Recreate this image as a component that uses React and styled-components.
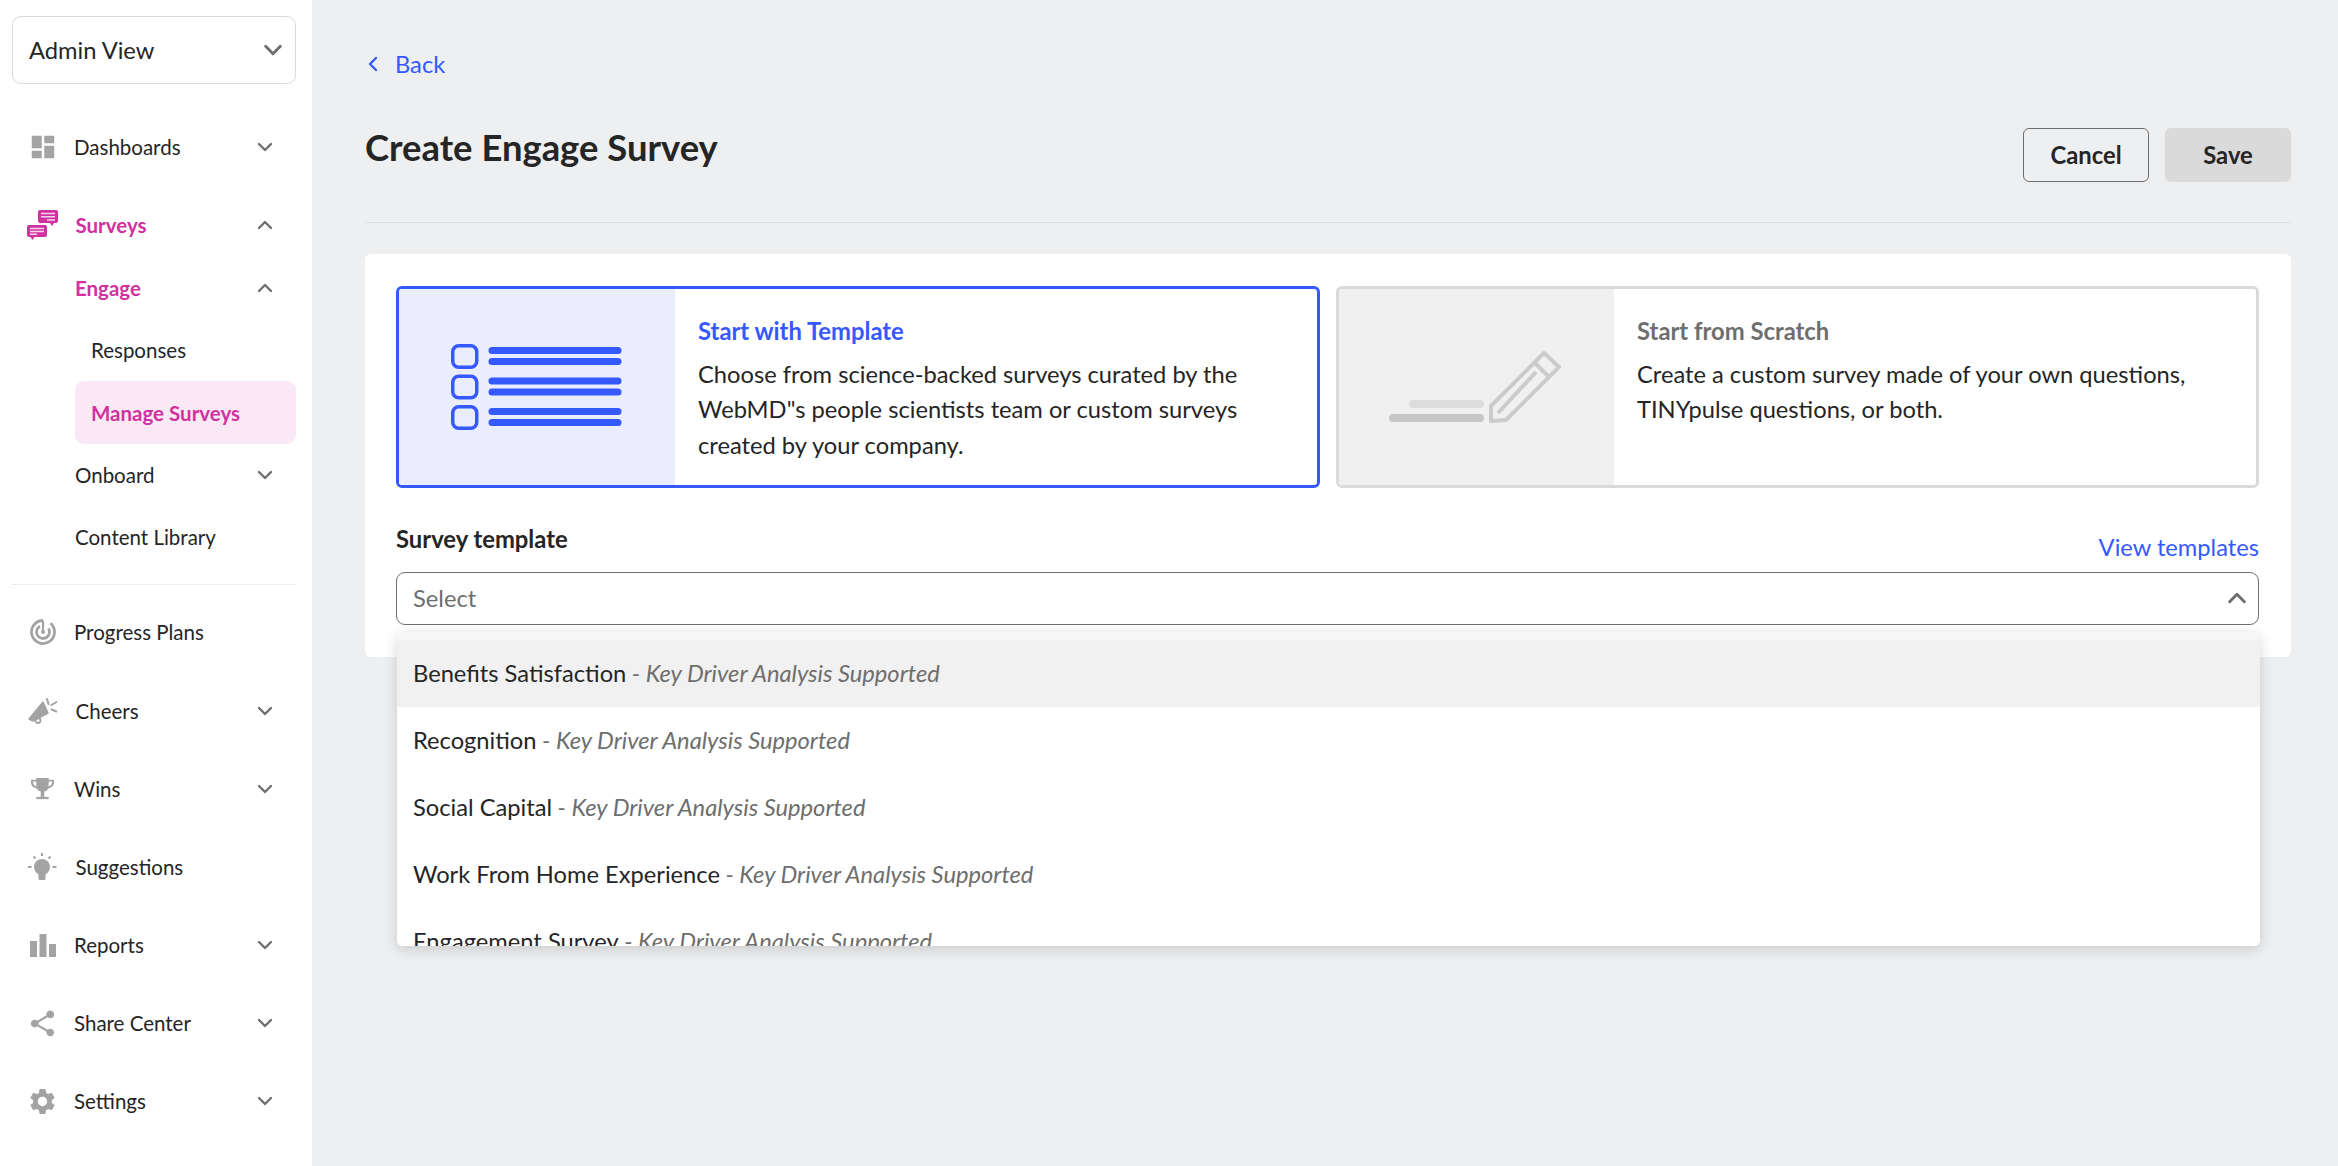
import React from 'react'
import styled, { createGlobalStyle } from 'styled-components'
import { MdDashboard, MdShare, MdSettings } from 'react-icons/md'

const blue = '#3558ff'
const pink = '#d0329f'
const ink = '#252525'
const grey = '#6e6e6e'
const iconGrey = '#a3a3a3'

const GlobalStyle = createGlobalStyle`
  html, body {
    margin: 0;
    padding: 0;
    height: 100%;
    overflow: hidden;
    background: #eeeff1;
    font-family: 'Lato', 'Liberation Sans', sans-serif;
    color: ${ink};
  }
  * {
    box-sizing: border-box;
  }
`

const Page = styled.div`
  display: flex;
  width: 2338px;
  height: 1166px;
`

const Sidebar = styled.aside`
  width: 312px;
  flex-shrink: 0;
  height: 100%;
  background: #fff;
  padding: 16px 16px 0 12px;
`

const ViewSelect = styled.div`
  display: flex;
  align-items: center;
  justify-content: space-between;
  height: 68px;
  padding: 0 11.5px 1px 16px;
  background: #fff;
  border: 1.5px solid #dadada;
  border-radius: 9px;
  font-size: 23.7px;
`

const Nav = styled.nav`
  display: flex;
  flex-direction: column;
  gap: 15.8px;
  margin-top: 32px;
`

const Group = styled.div`
  display: flex;
  flex-direction: column;
`

const Row = styled.div`
  display: flex;
  align-items: center;
  height: 62.4px;
  padding-left: ${p => p.$indent || 0}px;
  padding-right: 21.7px;
  font-size: 20.5px;
  font-weight: ${p => (p.$active ? 700 : 400)};
  color: ${p => (p.$active ? pink : ink)};
  background: ${p => (p.$selected ? '#fae9f4' : 'transparent')};
  border-radius: ${p => (p.$selected ? '9px' : '0')};
  margin-left: ${p => p.$inset || 0}px;
`

const IconSlot = styled.span`
  display: flex;
  align-items: center;
  justify-content: center;
  width: 40px;
  margin-left: 10.5px;
  margin-right: ${p => p.$gap ?? 11.5}px;
  flex-shrink: 0;
  color: ${p => (p.$active ? pink : iconGrey)};
`

const Label = styled.span`
  flex: 1;
`

const Divider = styled.hr`
  margin: 0;
  border: 0;
  border-top: 1.5px dotted #dedede;
`

const Main = styled.main`
  flex: 1;
  padding: 40px 47px 0 53px;
`

const BackLink = styled.a`
  display: flex;
  align-items: center;
  gap: 12px;
  height: 48px;
  margin-bottom: 40px;
  font-size: 23.7px;
  color: ${blue};
`

const Header = styled.header`
  display: flex;
  justify-content: space-between;
  padding-bottom: 40px;
  border-bottom: 1.5px solid #dcdde0;
`

const Title = styled.h1`
  margin: 0;
  font-size: 36.4px;
  line-height: 38px;
  font-weight: 700;
  color: ${ink};
`

const Actions = styled.div`
  display: flex;
  gap: 16px;
`

const Button = styled.button`
  width: 126px;
  height: 54px;
  font-family: inherit;
  font-size: 23.8px;
  font-weight: 700;
  color: ${ink};
  border-radius: 6px;
  border: ${p => (p.$ghost ? '1.5px solid #6e6e6e' : '0')};
  background: ${p => (p.$ghost ? 'transparent' : '#dadada')};
`

const Card = styled.section`
  margin-top: 31px;
  padding: 32px 32px 32px 31px;
  background: #fff;
  border-radius: 6px;
`

const Options = styled.div`
  display: grid;
  grid-template-columns: 924px 923px;
  gap: 16px;
`

const Option = styled.div`
  display: flex;
  height: 202px;
  overflow: hidden;
  border-radius: 6px;
  border: 3px solid ${p => (p.$on ? blue : '#dadada')};
`

const OptionArt = styled.div`
  display: flex;
  align-items: center;
  justify-content: center;
  width: ${p => (p.$on ? 276 : 275)}px;
  flex-shrink: 0;
  background: ${p => (p.$on ? '#e9edff' : '#f0f0f0')};
`

const OptionText = styled.div`
  padding: 23.5px 20px 0 23px;
`

const OptionTitle = styled.div`
  font-size: 23.8px;
  line-height: 36px;
  font-weight: 700;
  margin-bottom: 8px;
  color: ${p => (p.$on ? blue : grey)};
`

const OptionBody = styled.div`
  font-size: 23.7px;
  line-height: 35.7px;
  color: ${ink};
`

const FieldHead = styled.div`
  display: flex;
  align-items: flex-end;
  justify-content: space-between;
  height: 53px;
  margin: 24px 0 7px;
`

const FieldLabel = styled.label`
  font-size: 23.8px;
  line-height: 36px;
  font-weight: 700;
  padding-bottom: 8px;
`

const ViewLink = styled.a`
  font-size: 23.7px;
  line-height: 36px;
  color: ${blue};
`

const SelectWrap = styled.div`
  position: relative;
`

const SelectBox = styled.div`
  display: flex;
  align-items: center;
  justify-content: space-between;
  height: 53px;
  padding: 0 10.5px 1px 16px;
  font-size: 23.7px;
  color: ${grey};
  background: #fff;
  border: 1.5px solid #707070;
  border-radius: 9px;
`

const Menu = styled.ul`
  position: absolute;
  top: 60px;
  left: 1px;
  right: -1px;
  height: 314px;
  margin: 0;
  padding: 8px 0 0;
  overflow: hidden;
  list-style: none;
  background: linear-gradient(#f6f6f6 8px, #fff 8px);
  border-radius: 6px;
  box-shadow: 0 3px 14px rgba(0, 0, 0, 0.16);
`

const MenuItem = styled.li`
  display: flex;
  align-items: center;
  flex-shrink: 0;
  height: 67px;
  padding: 0 16px 2px;
  font-size: 23.7px;
  white-space: pre;
  color: ${ink};
  background: ${p => (p.$hover ? '#f1f1f1' : '#fff')};
`

const Hint = styled.em`
  color: ${grey};
  font-style: italic;
`

const Chevron = ({ up, left, size = 18, color = '#6e6e6e' }) => {
  const points = left ? '11,3 5,9 11,15' : up ? '3,12 9,6 15,12' : '3,6 9,12 15,6'
  return (
    <svg width={size} height={size} viewBox="0 0 18 18" fill="none">
      <polyline points={points} stroke={color} strokeWidth="2.4" strokeLinecap="round" strokeLinejoin="round" />
    </svg>
  )
}

const SurveysIcon = () => (
  <svg width="31" height="30" viewBox="0 0 31 30">
    <rect x="11" y="0" width="20" height="13" rx="2" fill="currentColor" />
    <path d="M23 13h4l-2 3z" fill="currentColor" />
    <rect x="0" y="15" width="20" height="12" rx="2" fill="currentColor" />
    <path d="M3.5 27h4l-2 3z" fill="currentColor" />
    <path d="M14 3.5h14M14 6.8h14M20 10h8M3 18.5h14M3 21.5h14M3 24.3h7" stroke="#f7d5ec" strokeWidth="1.5" />
  </svg>
)

const ProgressIcon = () => (
  <svg width="26" height="26" viewBox="0 0 26 26" fill="none" stroke="currentColor" strokeWidth="2.8">
    <path d="M13 1.5A11.5 11.5 0 1 0 20.5 4.3" />
    <path d="M10 7.2A6.5 6.5 0 1 0 18.5 9.5" />
    <path d="M13 1.5V13" strokeWidth="2.2" />
    <circle cx="13" cy="13" r="2" fill="currentColor" stroke="none" />
  </svg>
)

const CheersIcon = () => (
  <svg width="29" height="27" viewBox="0 0 29 27">
    <path d="M1 22 15 5l5 11L5 24z" fill="currentColor" stroke="currentColor" strokeWidth="1.5" strokeLinejoin="round" />
    <circle cx="10" cy="23.5" r="2.5" fill="none" stroke="currentColor" strokeWidth="1.8" />
    <path d="M19 2l1.5 5M23.5 8l5-3M23.5 12.5l5 2" stroke="currentColor" strokeWidth="2" strokeLinecap="round" fill="none" />
  </svg>
)

const TrophyIcon = () => (
  <svg width="23" height="23" viewBox="0 0 26 24" fill="currentColor">
    <path d="M6 0h14v2h6v3c0 4-3 6.5-6.5 7-1 2-2.5 3-4.500 3.500V22h-4v-6.500C9 15 7.500 14 6.500 12 3 11.500 0 9 0 5V2h6zM2.300 4.200V5c0 2.300 1.600 4 3.800 4.600-.1-1-.1-3.500-.1-5.400zm21.400 0H20c0 1.900 0 4.400-.1 5.400 2.200-.6 3.800-2.300 3.800-4.600z" />
    <rect x="6" y="21.5" width="14" height="2.5" />
  </svg>
)

const BulbIcon = () => (
  <svg width="29" height="27" viewBox="0 0 29 27" fill="currentColor">
    <circle cx="14" cy="14" r="8" />
    <rect x="10.5" y="18" width="7" height="9" rx="1" />
    <path d="M14 0v3M5.5 3.5l2 2M22.5 3.5l-2 2M0 14h3.5M24.5 14h4" stroke="currentColor" strokeWidth="2" fill="none" />
  </svg>
)

const BarsIcon = () => (
  <svg width="26" height="23" viewBox="0 0 26 23" fill="currentColor">
    <rect x="0" y="7" width="7" height="16" />
    <rect x="9.5" y="0" width="7" height="23" />
    <rect x="19" y="10" width="7" height="13" />
  </svg>
)

const TemplateArt = () => (
  <svg width="172" height="86" viewBox="0 0 172 86" fill="none">
    {[0, 30.5, 61].map(y => (
      <g key={y}>
        <rect x="1.75" y={y + 1.75} width="24" height="21.5" rx="6" stroke={blue} strokeWidth="3.5" />
        <rect x="37.5" y={y + 3} width="133" height="7" rx="3.5" fill={blue} />
        <rect x="37.5" y={y + 14} width="133" height="7" rx="3.5" fill={blue} />
      </g>
    ))}
  </svg>
)

const ScratchArt = () => (
  <svg width="180" height="76" viewBox="0 0 180 76" fill="none">
    <rect x="22" y="51" width="75" height="8" rx="4" fill="#dcdcdc" />
    <rect x="2" y="65" width="95" height="8" rx="4" fill="#c6c6c6" />
    <g stroke="#cbcbcb" strokeWidth="4" strokeLinejoin="round">
      <path d="M104 72V57L157 4l15 14-53 53z" />
      <path d="M111 64l38-41M147 13l15 15" />
    </g>
  </svg>
)

const sideItems = [
  ['Progress Plans', <ProgressIcon />, false, 11.5],
  ['Cheers', <CheersIcon />, true, 13],
  ['Wins', <TrophyIcon />, true, 11.5],
  ['Suggestions', <BulbIcon />, false, 13],
  ['Reports', <BarsIcon />, true, 11.5],
  ['Share Center', <MdShare size={31} />, true, 11.5],
  ['Settings', <MdSettings size={31} />, true, 11.5]
]

const templates = [
  'Benefits Satisfaction',
  'Recognition',
  'Social Capital',
  'Work From Home Experience',
  'Engagement Survey'
]

const App = () => {
  return (
    <Page>
      <GlobalStyle />
      <Sidebar>
        <ViewSelect>
          Admin View
          <Chevron size={22} />
        </ViewSelect>
        <Nav>
          <Row>
            <IconSlot><MdDashboard size={30} /></IconSlot>
            <Label>Dashboards</Label>
            <Chevron />
          </Row>
          <Group>
            <Row $active>
              <IconSlot $active $gap={13}><SurveysIcon /></IconSlot>
              <Label>Surveys</Label>
              <Chevron up />
            </Row>
            <Row $active $indent={63}>
              <Label>Engage</Label>
              <Chevron up />
            </Row>
            <Row $indent={79}>
              <Label>Responses</Label>
            </Row>
            <Row $active $selected $inset={63} $indent={16}>
              <Label>Manage Surveys</Label>
            </Row>
            <Row $indent={63}>
              <Label>Onboard</Label>
              <Chevron />
            </Row>
            <Row $indent={63}>
              <Label>Content Library</Label>
            </Row>
          </Group>
          <Divider />
          {sideItems.map(([name, icon, hasMenu, gap]) => (
            <Row key={name}>
              <IconSlot $gap={gap}>{icon}</IconSlot>
              <Label>{name}</Label>
              {hasMenu && <Chevron />}
            </Row>
          ))}
        </Nav>
      </Sidebar>
      <Main>
        <BackLink>
          <Chevron left size={18} color={blue} />
          Back
        </BackLink>
        <Header>
          <Title>Create Engage Survey</Title>
          <Actions>
            <Button $ghost>Cancel</Button>
            <Button>Save</Button>
          </Actions>
        </Header>
        <Card>
          <Options>
            <Option $on>
              <OptionArt $on><TemplateArt /></OptionArt>
              <OptionText>
                <OptionTitle $on>Start with Template</OptionTitle>
                <OptionBody>
                  Choose from science-backed surveys curated by the WebMD"s people scientists team or custom surveys created by your company.
                </OptionBody>
              </OptionText>
            </Option>
            <Option>
              <OptionArt><ScratchArt /></OptionArt>
              <OptionText>
                <OptionTitle>Start from Scratch</OptionTitle>
                <OptionBody>
                  Create a custom survey made of your own questions, TINYpulse questions, or both.
                </OptionBody>
              </OptionText>
            </Option>
          </Options>
          <FieldHead>
            <FieldLabel>Survey template</FieldLabel>
            <ViewLink>View templates</ViewLink>
          </FieldHead>
          <SelectWrap>
            <SelectBox>
              Select
              <Chevron up size={22} />
            </SelectBox>
            <Menu>
              {templates.map((name, i) => (
                <MenuItem key={name} $hover={i === 0}>
                  {name}<Hint> - Key Driver Analysis Supported</Hint>
                </MenuItem>
              ))}
            </Menu>
          </SelectWrap>
        </Card>
      </Main>
    </Page>
  )
}

export default App
